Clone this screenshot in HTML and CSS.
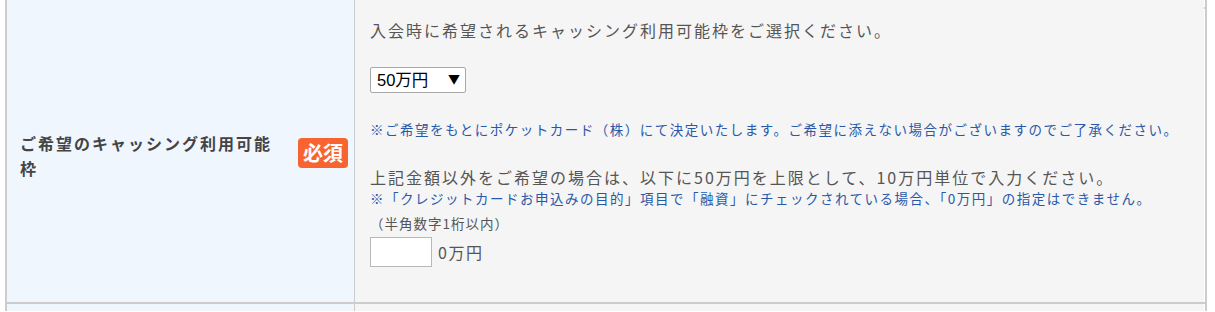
FILE: index.html
```html
<!DOCTYPE html>
<html lang="ja">
<head>
<meta charset="utf-8">
<title>キャッシング利用可能枠</title>
<link rel="stylesheet" href="styles.css">
</head>
<body>
<div class="form">
  <div class="row row-partial">
    <div class="th"></div>
    <div class="td"></div>
  </div>
  <div class="row row-main">
    <div class="th">
      <span class="label">ご希望のキャッシング利用可能枠</span>
      <span class="badge">必須</span>
    </div>
    <div class="td">
      <p class="lead">入会時に希望されるキャッシング利用可能枠をご選択ください。</p>
      <div class="select-wrap">
        <select class="select">
          <option>50万円</option>
        </select>
      </div>
      <p class="note note-first">※ご希望をもとにポケットカード（株）にて決定いたします。ご希望に添えない場合がございますのでご了承ください。</p>
      <p class="lead lead-second">上記金額以外をご希望の場合は、以下に50万円を上限として、10万円単位で入力ください。</p>
      <p class="note">※「クレジットカードお申込みの目的」項目で「融資」にチェックされている場合、「0万円」の指定はできません。</p>
      <p class="hint">（半角数字1桁以内）</p>
      <div class="amount">
        <input class="input" type="text">
        <span class="unit">0万円</span>
      </div>
    </div>
  </div>
  <div class="row row-partial">
    <div class="th"></div>
    <div class="td"></div>
  </div>
</div>
</body>
</html>
```

FILE: styles.css
```css
html, body {
  margin: 0;
  padding: 0;
  background: #ffffff;
}

body {
  font-family: "Noto Sans CJK JP", "Noto Sans", sans-serif;
  color: #555555;
}

.form {
  margin-left: 5px;
  width: 1198px;
  border-left: 2px solid #cccccc;
  border-right: 2px solid #cccccc;
}

.row {
  display: grid;
  grid-template-columns: 348px 849px;
}

.row + .row {
  border-top: 2px solid #cccccc;
}

.row-partial {
  height: 7px;
}

.row-main {
  height: 293px;
}

.th {
  background: #eff6fe;
  border-right: 1px solid #cccccc;
  display: flex;
  align-items: center;
  padding: 0 6px 0 13px;
}

.td {
  background-color: #f5f5f5;
  padding: 9px 15px 0 15px;
}

.label {
  width: 258px;
  font-size: 16px;
  font-weight: bold;
  letter-spacing: 2px;
  line-height: 25px;
  color: #444444;
}

.badge {
  margin-left: auto;
  background: #f8642f;
  color: #ffffff;
  font-size: 20px;
  font-weight: bold;
  line-height: 30px;
  height: 30px;
  padding: 0 5px;
  border-radius: 4px;
  margin-bottom: 5px;
}

p {
  margin: 0;
}

.lead {
  font-size: 16px;
  letter-spacing: 2px;
  line-height: 24px;
  color: #555555;
}

.select-wrap {
  position: relative;
  width: 96px;
  margin-top: 25px;
}

.select {
  appearance: none;
  -webkit-appearance: none;
  display: block;
  width: 96px;
  height: 26px;
  margin: 0;
  padding: 0 0 0 6px;
  border: 1px solid #a9a9a9;
  border-radius: 2px;
  background: #ffffff;
  font-family: "Liberation Sans", "Noto Sans CJK JP", sans-serif;
  font-size: 16.5px;
  color: #000000;
}

.select-wrap::after {
  content: "▼";
  position: absolute;
  left: 78px;
  top: 4px;
  font-size: 12px;
  line-height: 16px;
  color: #000000;
  pointer-events: none;
}

.note {
  font-size: 13.5px;
  letter-spacing: 1.5px;
  line-height: 20px;
  color: #2a58a8;
}

.note-first {
  margin-top: 26px;
}

.lead-second {
  margin-top: 27px;
  line-height: 22px;
}

.hint {
  font-size: 13.5px;
  letter-spacing: 1px;
  line-height: 24px;
  color: #555555;
  margin-top: 3px;
}

.amount {
  display: flex;
  align-items: center;
  gap: 6px;
  margin-top: 2px;
}

.input {
  width: 62px;
  height: 30px;
  box-sizing: border-box;
  margin: 0;
  border: 1px solid #b8b8b8;
  background: #ffffff;
  padding: 0 4px;
}

.unit {
  font-size: 16px;
  letter-spacing: 1.6px;
  color: #555555;
}
```
